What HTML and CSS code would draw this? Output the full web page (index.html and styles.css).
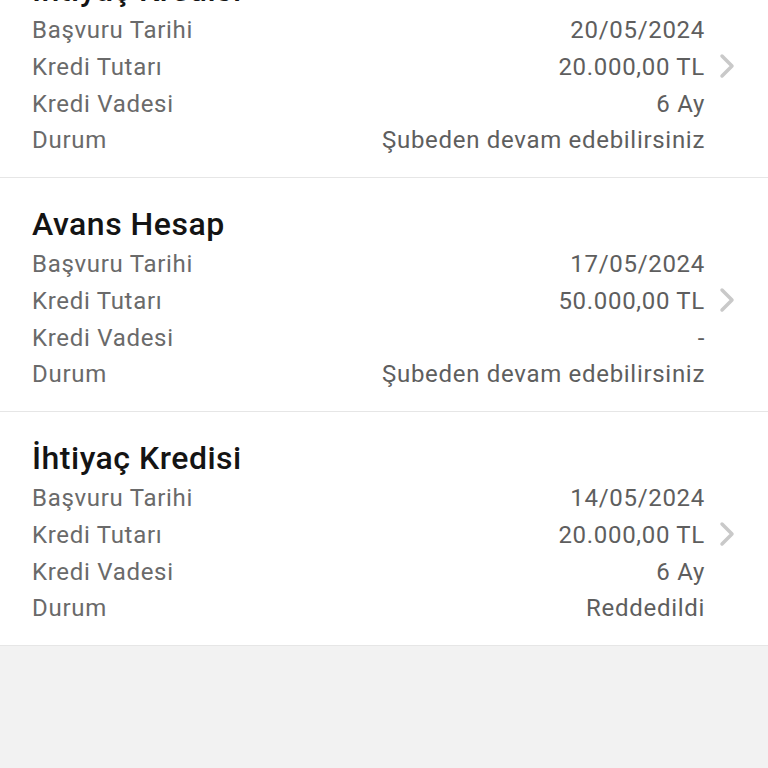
FILE: index.html
```html
<!DOCTYPE html>
<html lang="tr">
<head>
    <meta charset="utf-8">
    <meta name="viewport" content="width=device-width, initial-scale=1.0">
    <title>Kredi Başvurularım</title>
    <link rel="stylesheet" href="styles.css">
</head>
<body>
    <div class="list">
        <div class="card first">
            <div class="info">
                <div class="title">İhtiyaç Kredisi</div>
                <div class="row"><span class="label">Başvuru Tarihi</span><span class="value">20/05/2024</span></div>
                <div class="row"><span class="label">Kredi Tutarı</span><span class="value">20.000,00 TL</span></div>
                <div class="row"><span class="label">Kredi Vadesi</span><span class="value">6 Ay</span></div>
                <div class="row"><span class="label">Durum</span><span class="value">Şubeden devam edebilirsiniz</span></div>
            </div>
            <svg class="chevron" viewBox="0 0 16 26"><path d="M3 3 L13 13 L3 23"/></svg>
        </div>
        <div class="card">
            <div class="info">
                <div class="title">Avans Hesap</div>
                <div class="row"><span class="label">Başvuru Tarihi</span><span class="value">17/05/2024</span></div>
                <div class="row"><span class="label">Kredi Tutarı</span><span class="value">50.000,00 TL</span></div>
                <div class="row"><span class="label">Kredi Vadesi</span><span class="value">-</span></div>
                <div class="row"><span class="label">Durum</span><span class="value">Şubeden devam edebilirsiniz</span></div>
            </div>
            <svg class="chevron" viewBox="0 0 16 26"><path d="M3 3 L13 13 L3 23"/></svg>
        </div>
        <div class="card">
            <div class="info">
                <div class="title">İhtiyaç Kredisi</div>
                <div class="row"><span class="label">Başvuru Tarihi</span><span class="value">14/05/2024</span></div>
                <div class="row"><span class="label">Kredi Tutarı</span><span class="value">20.000,00 TL</span></div>
                <div class="row"><span class="label">Kredi Vadesi</span><span class="value">6 Ay</span></div>
                <div class="row"><span class="label">Durum</span><span class="value">Reddedildi</span></div>
            </div>
            <svg class="chevron" viewBox="0 0 16 26"><path d="M3 3 L13 13 L3 23"/></svg>
        </div>
    </div>
</body>
</html>
```

FILE: styles.css
```css
html, body {
    margin: 0;
    padding: 0;
    height: 100%;
    overflow: hidden;
}
body {
    background-color: #f2f2f2;
    font-family: Roboto, "Noto Sans", sans-serif;
}
.list {
    display: flex;
    flex-direction: column;
}
.card {
    display: flex;
    align-items: center;
    background-color: #ffffff;
    border-bottom: 1px solid #e6e6e6;
    padding: 28px 33px 18px 32px;
    height: 234px;
    box-sizing: border-box;
}
.card.first {
    margin-top: -56px;
}
.info {
    flex: 1;
}
.title {
    font-size: 32px;
    font-weight: 500;
    letter-spacing: 0.5px;
    line-height: 36px;
    color: #141414;
    margin-bottom: 4px;
}
.row {
    display: flex;
    justify-content: space-between;
    font-size: 24px;
    letter-spacing: 0.7px;
    line-height: 36.8px;
}
.label {
    color: #6a6a6a;
}
.value {
    color: #5e5e5e;
}
.chevron {
    width: 16px;
    height: 26px;
    margin-left: 14px;
    flex-shrink: 0;
}
.chevron path {
    fill: none;
    stroke: #c9c9c9;
    stroke-width: 3.5;
    stroke-linecap: round;
    stroke-linejoin: round;
}
```
